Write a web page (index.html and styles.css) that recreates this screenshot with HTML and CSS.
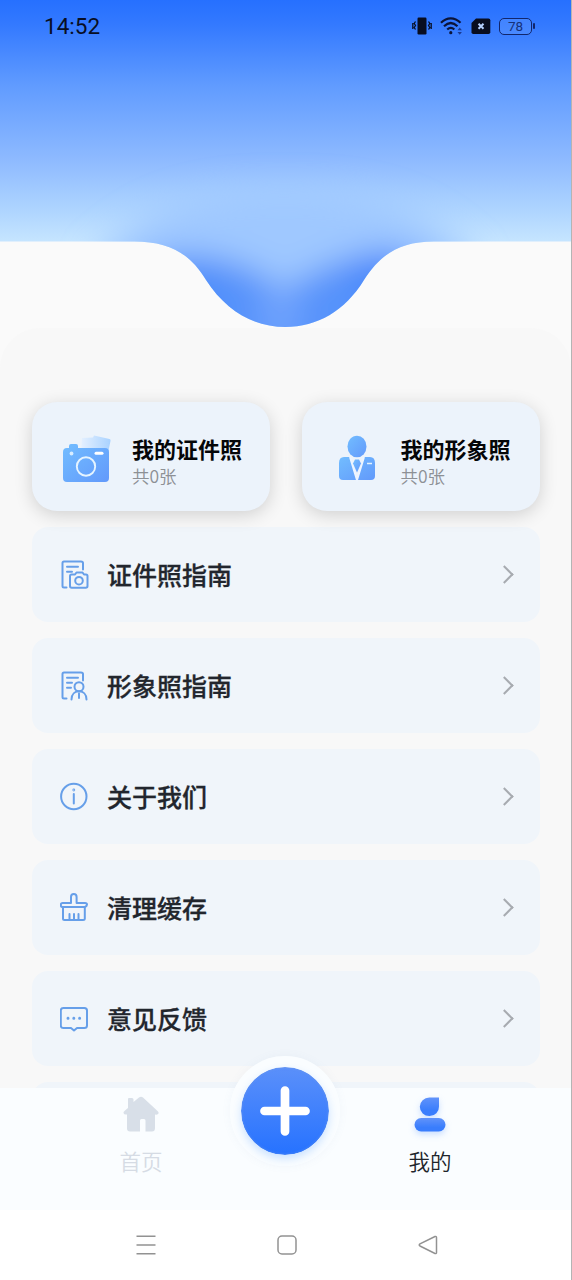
FILE: index.html
```html
<!DOCTYPE html>
<html lang="zh-CN">
<head>
<meta charset="utf-8">
<title>我的</title>
<link rel="stylesheet" href="styles.css">
</head>
<body>
<div class="screen">
  <header class="hero">
    <svg class="hero-bg" viewBox="0 0 571 330" width="571" height="330">
      <defs>
        <linearGradient id="sky" x1="0" y1="0" x2="0" y2="242" gradientUnits="userSpaceOnUse">
          <stop offset="0" stop-color="#2670ff"/><stop offset=".1" stop-color="#3379ff"/>
          <stop offset=".35" stop-color="#609bff"/><stop offset=".66" stop-color="#8ebaff"/>
          <stop offset=".88" stop-color="#b0d6ff"/><stop offset="1" stop-color="#c6e5ff"/>
        </linearGradient>
        <filter id="soft" x="-50%" y="-50%" width="200%" height="200%"><feGaussianBlur stdDeviation="16"/></filter>
        <clipPath id="wave"><path d="M0 0H571V241.500H434C399 241.500 380 255 364 280C345 311 317 327 285.500 327C254 327 226 311 206 280C191 255 171 241.500 134 241.500H0Z"/></clipPath>
      </defs>
      <g clip-path="url(#wave)">
        <rect width="571" height="330" fill="url(#sky)"/>
        <g filter="url(#soft)">
          <path d="M90 262C150 200 210 190 285 190S420 200 480 262L390 360H180Z" fill="#9fc8ff"/>
          <path d="M145 262Q215 240 285 290Q355 240 425 262L370 370H200Z" fill="#5793fb"/>
          <ellipse cx="382" cy="275" rx="36" ry="24" fill="#3d80fa" opacity=".65"/>
          <ellipse cx="188" cy="292" rx="36" ry="24" fill="#4585fa" opacity=".5"/>
          <ellipse cx="280" cy="318" rx="20" ry="34" fill="#80adff" opacity=".6"/>
        </g>
      </g>
    </svg>
    <div class="status">
      <span class="clock">14:52</span>
      <div class="status-icons">
        <svg width="20" height="18" viewBox="0 0 20 18"><rect x="5.500" y=".5" width="9" height="17" rx="1.200" fill="#080d20"/><path d="M3.500 4.500l-1.300 2 1.300 2-1.300 2 1.300 2M.8 6v6M16.500 4.500l1.300 2-1.300 2 1.300 2-1.300 2M19.200 6v6" fill="none" stroke="#080d20" stroke-width="1.300"/></svg>
        <svg width="23" height="18" viewBox="0 0 23 18"><g fill="none" stroke="#0b1438" stroke-width="2.200"><path d="M1 5.800C7-.2 14.500-.2 20.500 5.800"/><path d="M4 9.200C8.500 4.900 13 4.900 17.500 9.200"/><path d="M7.200 12.500C9.700 10.200 12 10.200 14.300 12.500"/></g><circle cx="10.800" cy="15.700" r="1.600" fill="#0b1438"/><path d="M17.500 13.200l2.200-2.700 2.200 2.700zM17.500 15l2.200 2.700 2.200-2.700z" fill="#1a3a92"/></svg>
        <svg width="20" height="17" viewBox="0 0 20 17"><path d="M5 .5H17.500Q19.300.5 19.300 2.300V14.200Q19.300 16 17.500 16H2.300Q.5 16 .5 14.200V5z" fill="#080d20"/><path d="M7.500 5.700l5 5M12.500 5.700l-5 5" stroke="#b4d0ff" stroke-width="2"/></svg>
        <div class="battery"><span class="battery-level">78</span></div>
      </div>
    </div>
  </header>

  <main class="panel">
    <div class="cards">
      <section class="card">
        <svg class="card-icon" width="48" height="50" viewBox="0 0 48 50">
          <defs><linearGradient id="blue" x1="0" y1="0" x2="1" y2="1"><stop offset="0" stop-color="#72bdff"/><stop offset="1" stop-color="#6299fb"/></linearGradient>
          <linearGradient id="paper" x1="0" y1="0" x2="1" y2="0"><stop offset="0" stop-color="#e4f0ff"/><stop offset="1" stop-color="#a9d2ff"/></linearGradient></defs>
          <path d="M19 3L30 2.500L31 .5L46.500 4Q48 4.500 47.500 6L45 18H18z" fill="url(#paper)"/>
          <path d="M8 9h5q2 0 2 2v2h27q4 0 4 4v26q0 4-4 4H4q-4 0-4-4V17q0-4 4-4h2v-2q0-2 2-2z" fill="url(#blue)"/>
          <circle cx="23" cy="31.500" r="9.200" fill="none" stroke="#e5f4ff" stroke-width="1.900"/><circle cx="8.500" cy="18.500" r="1.900" fill="#d8edff"/><rect x="31.500" y="16.700" width="9" height="3" rx="1.500" fill="#fff"/>
        </svg>
        <div class="card-text"><h2>我的证件照</h2><p>共0张</p></div>
      </section>
      <section class="card card-portrait">
        <svg class="card-icon" width="38" height="48" viewBox="0 0 38 48">
          <ellipse cx="19" cy="11.500" rx="9.500" ry="10.800" fill="url(#blue)"/><path d="M12 22L19 45L26 22H32Q37 22 37 28V41Q37 45 33 45H5Q1 45 1 41V28Q1 22 6 22z" fill="url(#blue)"/><path d="M12 22L19 45L26 22" fill="none" stroke="#edf5ff" stroke-width="2"/><path d="M17 24.500h4l2 4-4 9-4-9z" fill="url(#blue)"/><path d="M29 28.500h5" stroke="#e4f3ff" stroke-width="1.500"/>
        </svg>
        <div class="card-text"><h2>我的形象照</h2><p>共0张</p></div>
      </section>
    </div>

    <nav class="menu">
      <a class="row"><svg class="row-icon" viewBox="0 0 30 30"><path d="M6.500 27.500H4Q2.500 27.500 2.500 26V3Q2.500 1.500 4 1.500H21Q23 1.500 23 3V9.500M7 6.700H18M7 11.800H12"/><path d="M15 14.500l1.500-2h6l1.500 2h2q1.500 0 1.500 1.500v10q0 1.700-1.700 1.700H11.700Q10 27.700 10 26V16q0-1.500 1.500-1.500z"/><circle cx="19" cy="20.700" r="3.800"/></svg><span>证件照指南</span><i class="chevron"></i></a>
      <a class="row"><svg class="row-icon" viewBox="0 0 30 30"><path d="M6.500 27.500H4Q2.500 27.500 2.500 26V3Q2.500 1.500 4 1.500H21Q23 1.500 23 3V9.500M7 6.700H18M7 11.800H12M7 16.800H11"/><circle cx="19" cy="15.700" r="4.500"/><path d="M11.500 28.500C11.500 23 15 20.300 19 20.300S26.500 23 26.500 28.500M19 22.500V27"/></svg><span>形象照指南</span><i class="chevron"></i></a>
      <a class="row"><svg class="row-icon" viewBox="0 0 30 30"><circle cx="13.800" cy="14.500" r="12.700"/><path d="M13.800 12V21.500"/><circle cx="13.800" cy="8" r=".4"/></svg><span>关于我们</span><i class="chevron"></i></a>
      <a class="row"><svg class="row-icon" viewBox="0 0 30 30"><path d="M11 10V4Q11 1 13.800 1T16.600 4V10H25Q27 10 27 11.500T25 14H2.500Q.8 14 .8 12T2.500 10zM3 14.500V25.500Q3 27 4.500 27H23Q24.800 27 24.800 25.500V14.500M9.500 21V26.500M14 21V26.500M18.500 21V26.500"/></svg><span>清理缓存</span><i class="chevron"></i></a>
      <a class="row"><svg class="row-icon" viewBox="0 0 30 30"><path d="M3.300 4H24.300Q27 4 27 6.500V21.500Q27 24 24.300 24H17L14 26.500L11 24H3.300Q.8 24 .8 21.500V6.500Q.8 4 3.300 4z"/><path class="dots" d="M8 14.300h.01M13.800 14.300h.01M19.600 14.300h.01"/></svg><span>意见反馈</span><i class="chevron"></i></a>
      <a class="row"></a>
    </nav>
  </main>

  <nav class="tabbar">
    <div class="tab"><svg width="38" height="38" viewBox="0 0 38 38"><path d="M6 10V3Q6 2 7 2H10Q11.500 2 11.500 3.500V6L17 1.500Q19 0 21 1.500L35.500 15Q37.500 17 36 18Q35 19 33 18.500V32Q33 35.500 30 35.500H23.500V24.500Q23.500 23 22 23H19.500Q18 23 18 24.500V35.500H8Q5 35.500 5 32.500V18.500Q2 19 1.500 17Q1 16 3 14.500L6 12z" fill="#d8dfe8"/></svg><span>首页</span></div>
    <div class="add"><svg width="50" height="50" viewBox="0 0 50 50"><path d="M25 4.500V45.500M4.500 25H45.500" stroke="#fff" stroke-width="8.700" stroke-linecap="round"/></svg></div>
    <div class="tab tab-active"><svg width="38" height="38" viewBox="0 0 38 38"><defs><linearGradient id="me" x1="0" y1="0" x2="0" y2="1"><stop offset="0" stop-color="#6193fa"/><stop offset=".7" stop-color="#397dfd"/></linearGradient></defs><path d="M28 1.500V10.500A9.600 9.300 0 1 1 18.500 1.500Z" fill="url(#me)"/><rect x="3.500" y="22" width="31" height="13.500" rx="6.700" fill="url(#me)"/></svg><span>我的</span></div>
  </nav>

  <footer class="sysnav">
    <svg width="20" height="22" viewBox="0 0 20 22"><path d="M.5 2.200H19.500M.5 11H19.500M.5 19.700H19.500"/></svg>
    <svg width="20" height="22" viewBox="0 0 20 22"><rect x="1" y="2" width="18" height="18" rx="4"/></svg>
    <svg width="20" height="22" viewBox="0 0 20 22"><path d="M17 2.500L2 9.800Q.5 11 2 12L17 19.500Q18.500 20 18.500 18.500V3.500Q18.500 2 17 2.500z"/></svg>
  </footer>
</div>
</body>
</html>
```

FILE: styles.css
```css
* { box-sizing: border-box; }
body { margin: 0; font-family: "Noto Sans CJK SC", sans-serif; }
.screen { width: 572px; height: 1280px; display: flex; flex-direction: column; overflow: hidden; background: #fafafa; border-right: 1px solid #b4b4b4; }

.hero { position: relative; height: 328px; flex: none; }
.hero-bg { position: absolute; top: 0; left: 0; }
.status { position: relative; display: flex; justify-content: space-between; align-items: center; height: 52px; padding: 0 39px 0 44px; }
.clock { font: 400 22.5px/30px Roboto, sans-serif; color: #080e24; }
.status-icons { display: flex; align-items: center; gap: 8px; }
.status-icons svg { display: block; }
.battery { position: relative; width: 33px; height: 17px; border: 1.5px solid #11266c; border-radius: 5px; display: flex; align-items: center; justify-content: center; background: rgba(120, 170, 255, .25); }
.battery::after { content: ""; position: absolute; right: -4px; top: 4px; width: 2px; height: 6px; background: #11266c; border-radius: 1px; }
.battery-level { font: 13.5px/14px Roboto, sans-serif; color: #163178; }

.panel { height: 760px; flex: none; padding: 74px 31px 0 32px; background: #f8f8f8; border-radius: 40px 40px 0 0; overflow: hidden; }
.cards { position: relative; z-index: 1; display: flex; gap: 32px; }
.card { width: 238px; height: 109px; flex: none; display: flex; padding: 33px 0 0 31px; gap: 21px; background: #ecf3fb; border-radius: 25px; box-shadow: 0 4px 18px rgba(0, 0, 0, .16); }
.card-portrait { padding-left: 36px; gap: 24.5px; }
.card-icon { flex: none; }
.card-text { margin-top: -2px; }
.card-text h2 { margin: 0; font-size: 22px; line-height: 30px; font-weight: 700; color: #050608; white-space: nowrap; }
.card-text p { margin: 1px 0 0; font-size: 17.5px; line-height: 24px; font-weight: 350; color: #8d9095; }

.menu { display: flex; flex-direction: column; gap: 16px; margin-top: 16px; }
.row { height: 95px; flex: none; display: flex; align-items: center; padding: 0 26px 0 28px; background: #f0f5fa; border-radius: 16px; color: #22262d; font-size: 25px; line-height: 36px; font-weight: 500; }
.row span { padding-bottom: 2px; -webkit-text-stroke: .3px #22262d; }
.row-icon { width: 30px; height: 30px; margin-right: 17px; fill: none; stroke: #669fe9; stroke-width: 2; stroke-linecap: round; stroke-linejoin: round; }
.row-icon .dots { stroke-width: 3; }
.chevron { width: 13px; height: 13px; margin: 0 3px 0 auto; border: solid #a7abb0; border-width: 2px 2px 0 0; transform: rotate(45deg); }

.tabbar { position: relative; z-index: 2; height: 122px; flex: none; display: flex; background: #fafdff; }
.tab { width: 86px; margin-left: 98px; padding-top: 8px; display: flex; flex-direction: column; align-items: center; color: #d5dbe4; font-size: 21.5px; line-height: 32px; font-weight: 350; }
.tab svg { margin-bottom: 11px; overflow: visible; }
.tab-active { margin-left: 47px; color: #20242a; }
.tab-active svg { filter: drop-shadow(0 3px 3px rgba(60, 130, 255, .25)); }
.add { position: relative; width: 110px; height: 110px; flex: none; margin: -32px 0 0 46px; display: flex; align-items: center; justify-content: center; border: 11px solid #fafdff; border-radius: 50%; background: linear-gradient(#5b90fa, #2672ff) padding-box; box-shadow: 0 0 10px rgba(100, 140, 180, .06), inset 0 0 3px rgba(120, 160, 230, .7); }
.add::before { content: ""; position: absolute; inset: 0; border-radius: 50%; box-shadow: 0 4px 8px rgba(40, 130, 255, .22); }

.sysnav { height: 70px; flex: none; display: flex; align-items: center; gap: 121px; padding-left: 135.5px; background: #fff; }
.sysnav svg { fill: none; stroke: #929292; stroke-width: 1.5; }
```
